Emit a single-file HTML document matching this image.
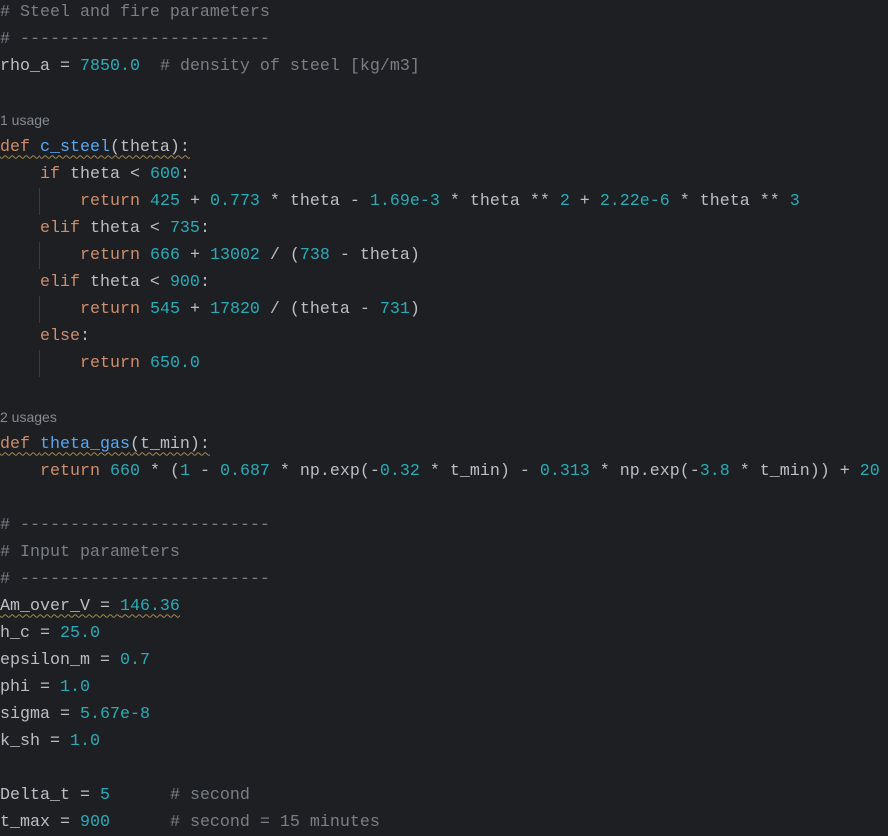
<!DOCTYPE html>
<html><head><style>
html,body{margin:0;padding:0;background:#1e1f22;width:888px;height:834px;overflow:hidden}
#c{position:absolute;left:0;top:-1.5px;font-family:"Liberation Mono",monospace;font-size:16.67px;color:#bcbec4}
.l{height:27px;line-height:27px;position:relative;white-space:pre}
.u{font-family:"Liberation Sans",sans-serif;font-size:14px;color:#868a91}
.k{color:#cf8e6d}.n{color:#2aacb8}.c{color:#7a7e85}.f{color:#56a8f5}
.w{text-decoration:underline wavy #a08a50;text-decoration-thickness:1px;text-underline-offset:4px}
.g{position:absolute;left:39px;top:0;width:1px;height:27px;background:#393b40}
</style></head><body><div id="c">
<div class="l"><span class="c"># Steel and fire parameters</span></div>
<div class="l"><span class="c"># -------------------------</span></div>
<div class="l">rho_a = <span class="n">7850.0</span>  <span class="c"># density of steel [kg/m3]</span></div>
<div class="l"> </div>
<div class="l u">1 usage</div>
<div class="l"><span class="w"><span class="k">def </span><span class="f">c_steel</span>(theta):</span></div>
<div class="l">    <span class="k">if</span> theta &lt; <span class="n">600</span>:</div>
<div class="l"><i class="g"></i>        <span class="k">return</span> <span class="n">425</span> + <span class="n">0.773</span> * theta - <span class="n">1.69e-3</span> * theta ** <span class="n">2</span> + <span class="n">2.22e-6</span> * theta ** <span class="n">3</span></div>
<div class="l">    <span class="k">elif</span> theta &lt; <span class="n">735</span>:</div>
<div class="l"><i class="g"></i>        <span class="k">return</span> <span class="n">666</span> + <span class="n">13002</span> / (<span class="n">738</span> - theta)</div>
<div class="l">    <span class="k">elif</span> theta &lt; <span class="n">900</span>:</div>
<div class="l"><i class="g"></i>        <span class="k">return</span> <span class="n">545</span> + <span class="n">17820</span> / (theta - <span class="n">731</span>)</div>
<div class="l">    <span class="k">else</span>:</div>
<div class="l"><i class="g"></i>        <span class="k">return</span> <span class="n">650.0</span></div>
<div class="l"> </div>
<div class="l u">2 usages</div>
<div class="l"><span class="w"><span class="k">def </span><span class="f">theta_gas</span>(t_min):</span></div>
<div class="l">    <span class="k">return</span> <span class="n">660</span> * (<span class="n">1</span> - <span class="n">0.687</span> * np.exp(-<span class="n">0.32</span> * t_min) - <span class="n">0.313</span> * np.exp(-<span class="n">3.8</span> * t_min)) + <span class="n">20</span></div>
<div class="l"> </div>
<div class="l"><span class="c"># -------------------------</span></div>
<div class="l"><span class="c"># Input parameters</span></div>
<div class="l"><span class="c"># -------------------------</span></div>
<div class="l"><span class="w">Am_over_V = <span class="n">146.36</span></span></div>
<div class="l">h_c = <span class="n">25.0</span></div>
<div class="l">epsilon_m = <span class="n">0.7</span></div>
<div class="l">phi = <span class="n">1.0</span></div>
<div class="l">sigma = <span class="n">5.67e-8</span></div>
<div class="l">k_sh = <span class="n">1.0</span></div>
<div class="l"> </div>
<div class="l">Delta_t = <span class="n">5</span>      <span class="c"># second</span></div>
<div class="l">t_max = <span class="n">900</span>      <span class="c"># second = 15 minutes</span></div>
</div></body></html>
